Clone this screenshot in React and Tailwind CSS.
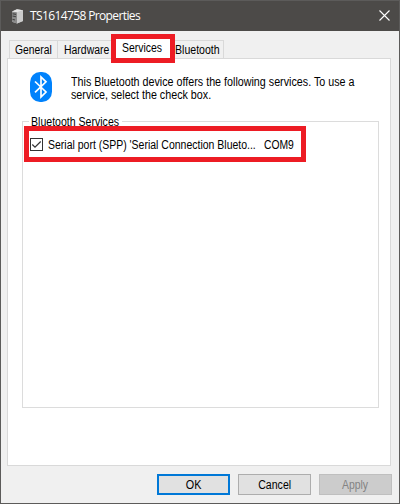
import React from "react";

function DeviceIcon() {
  return (
    <svg width="13" height="15" viewBox="0 0 13 15">
      <path d="M1 2.5 6 .3 12 1.3V12L6 14.6 1 12.8Z" fill="#bdbdbd" />
      <path d="M1 2.5 6 3.3V14.4L1 12.8Z" fill="#8a8a8a" />
      <path d="M6 3.3 12 1.3V12L6 14.5Z" fill="#cbcbcb" />
      <path d="M1.5 4.7 5 5.4M1.5 7 5 7.7M1.5 10.3 4 11" stroke="#444" strokeWidth="1.1" />
      <path d="M1 2.5 6 .3 12 1.3 6 3.3Z" fill="#e4e4e4" />
    </svg>
  );
}

function BluetoothIcon() {
  return (
    <svg width="22" height="30" viewBox="0 0 22 30" className="shrink-0">
      <rect width="22" height="30" rx="10" ry="10.5" fill="#0082fc" />
      <path d="M5 9.5 16 20 11 25V5L16 9.8 5 20.3" fill="none" stroke="#fff" strokeWidth="1.7" />
    </svg>
  );
}

const button = "flex h-[21px] w-[73px] items-center justify-center pt-px";
const label = "inline-block origin-left";

export default function App() {
  return (
    <div className="flex h-[504px] w-[400px] flex-col overflow-hidden border border-[#5c5b5a] bg-[#f0f0f0] font-['Liberation_Sans',Arial,sans-serif] text-[12px] leading-[13px] whitespace-nowrap text-black">
      <header className="flex h-[30px] shrink-0 items-center bg-[#4c4a48] pr-[9px] pl-[10px] text-white">
        <DeviceIcon />
        <h1 className="ml-[6px] flex-1 font-['Open_Sans','Noto_Sans',sans-serif] text-[12px] leading-[16px] tracking-[-0.62px]">TS1614758 Properties</h1>
        <svg width="11" height="11" viewBox="0 0 11 11" className="mb-px">
          <path d="M.5.5 10.5 10.5M10.5.5.5 10.5" stroke="#fff" strokeWidth="1.1" />
        </svg>
      </header>
      <nav className="flex h-[27px] shrink-0 items-end pl-[8px]">
        <div className="h-[18px] w-[48px] border-t border-l border-[#d9d9d9] pt-[3px] pl-[5px]"><span className={`${label} scale-x-[0.86]`}>General</span></div>
        <div className="h-[18px] w-[54px] border-t border-l border-[#d9d9d9] pt-[3px] pl-[6px]"><span className={`${label} scale-x-[0.87]`}>Hardware</span></div>
        <div className="relative z-10 -mb-[5px] h-[29px] w-[64px] shrink-0 border-[5px] border-[#ed1c24] bg-white pt-[3px] pl-[6px]"><span className={`${label} scale-x-[0.87]`}>Services</span></div>
        <div className="h-[18px] w-[49px] border-t border-r border-[#d9d9d9] pt-[3px]"><span className={`${label} scale-x-[0.88]`}>Bluetooth</span></div>
      </nav>
      <main className="ml-[6px] flex h-[408px] w-[384px] shrink-0 flex-col border border-[#d9d9d9] bg-white pl-[14px]">
        <div className="flex h-[62px] shrink-0 pt-[13px] pl-[8px]">
          <BluetoothIcon />
          <p className="ml-[19px] origin-left scale-x-[0.894] pt-[4px]">
            This Bluetooth device offers the following services. To use a<br />
            service, select the check box.
          </p>
        </div>
        <section className="h-[287px] w-[357px] shrink-0 border border-[#dcdcdc]">
          <h2 className="-mt-[6px] ml-[6px] h-[10px] w-[93px] bg-white pl-[2px]"><span className={`${label} scale-x-[0.88]`}>Bluetooth Services</span></h2>
          <div className="relative ml-px flex h-[36px] w-[282px] items-center border-[5px] border-[#ed1c24] bg-white pl-px">
            <svg width="13" height="13" viewBox="0 0 13 13" className="shrink-0">
              <rect x=".5" y=".5" width="12" height="12" fill="#fff" stroke="#333" />
              <path d="M2.3 6.5 5 9.2 10.7 3.5" fill="none" stroke="#333" strokeWidth="1.2" />
            </svg>
            <span className="ml-[5px] w-[216px] shrink-0 pt-[2px]"><span className={`${label} scale-x-[0.874]`}>Serial port (SPP) 'Serial Connection Blueto...</span></span>
            <span className={`${label} scale-x-[0.86] pt-[2px]`}>COM9</span>
          </div>
        </section>
      </main>
      <footer className="flex gap-[8px] pt-[8px] pl-[156px]">
        <button className={`${button} border-2 border-[#0078d7] bg-[#e1e1e1]`}><span className="scale-x-[0.9]">OK</span></button>
        <button className={`${button} border border-[#adadad] bg-[#e1e1e1]`}><span className="scale-x-[0.88]">Cancel</span></button>
        <button className={`${button} border border-[#bfbfbf] bg-[#cccccc] text-[#838383]`}><span className="scale-x-[0.87]">Apply</span></button>
      </footer>
    </div>
  );
}
